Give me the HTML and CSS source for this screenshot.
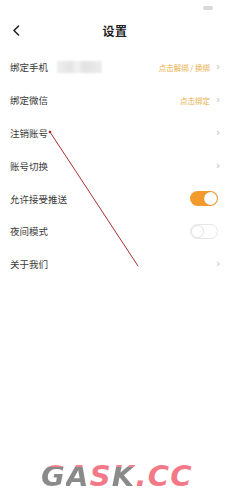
FILE: index.html
```html
<!DOCTYPE html>
<html lang="zh">
<head>
<meta charset="utf-8">
<link rel="stylesheet" href="styles.css">
</head>
<body>
<div class="screen">
  <div class="status"><span class="status-dot"></span></div>
  <div class="header">
    <svg class="back" width="8" height="11" viewBox="0 0 8 11"><path d="M6.5 1 L2 5.5 L6.5 10" fill="none" stroke="#222" stroke-width="1.6" stroke-linecap="round" stroke-linejoin="round"/></svg>
    <div class="title">设置</div>
  </div>
  <div class="list">
    <div class="row">
      <span class="label">绑定手机</span>
      <span class="phone"></span>
      <span class="spacer"></span>
      <span class="action">点击解绑 / 换绑</span>
      <span class="chev">›</span>
    </div>
    <div class="row">
      <span class="label">绑定微信</span>
      <span class="spacer"></span>
      <span class="action">点击绑定</span>
      <span class="chev">›</span>
    </div>
    <div class="row">
      <span class="label">注销账号</span>
      <span class="spacer"></span>
      <span class="chev">›</span>
    </div>
    <div class="row">
      <span class="label">账号切换</span>
      <span class="spacer"></span>
      <span class="chev">›</span>
    </div>
    <div class="row">
      <span class="label">允许接受推送</span>
      <span class="spacer"></span>
      <span class="toggle on"><span class="knob"></span></span>
    </div>
    <div class="row">
      <span class="label">夜间模式</span>
      <span class="spacer"></span>
      <span class="toggle off"><span class="knob"></span></span>
    </div>
    <div class="row">
      <span class="label">关于我们</span>
      <span class="spacer"></span>
      <span class="chev">›</span>
    </div>
  </div>
  <svg class="annot" width="230" height="498" viewBox="0 0 230 498"><circle cx="50" cy="132" r="1.3" fill="#a82020"/><path d="M50 132 L138 266" stroke="#a83030" stroke-width="1" fill="none" stroke-linecap="round"/></svg>
  <div class="watermark"><span class="wm-g">G</span><span class="wm-g">A</span><span class="wm-p">S</span><span class="wm-g">K</span><span class="wm-p">.CC</span></div>
</div>
</body>
</html>
```
FILE: styles.css
```css
html, body {
  margin: 0;
  padding: 0;
  background: #fff;
}
.screen {
  position: relative;
  width: 230px;
  height: 498px;
  overflow: hidden;
  font-family: "Noto Sans CJK SC", "Noto Sans", sans-serif;
  color: #333;
}
.status {
  height: 16px;
  display: flex;
  justify-content: flex-end;
  align-items: center;
  padding-right: 17px;
}
.status-dot {
  width: 10px;
  height: 4px;
  border-radius: 2px;
  background: #d8d8d8;
}
.header {
  position: relative;
  height: 29px;
  display: flex;
  align-items: center;
  justify-content: center;
}
.back {
  position: absolute;
  left: 12px;
  top: 9px;
}
.title {
  font-size: 12px;
  font-weight: 700;
  color: #222;
  letter-spacing: 0.5px;
}
.list {
  padding-top: 6px;
}
.row {
  height: 32.8px;
  display: flex;
  align-items: center;
  padding: 0 10px 0 10px;
}
.label {
  font-size: 9.5px;
  color: #3a3a3a;
}
.phone {
  width: 45px;
  height: 12px;
  margin-left: 9px;
  background: linear-gradient(90deg, #eeeeee 0%, #e4e4e4 30%, #f2f2f2 45%, #e2e2e2 60%, #ececec 100%);
  filter: blur(1px);
}
.spacer {
  flex: 1;
}
.action {
  font-size: 7.5px;
  color: #e9b04c;
  margin-right: 6px;
}
.chev {
  font-size: 11px;
  line-height: 10px;
  color: #bdbdbd;
  width: 4px;
  font-family: "DejaVu Sans", sans-serif;
}
.toggle {
  position: relative;
  width: 28px;
  height: 15px;
  border-radius: 8px;
  box-sizing: border-box;
  margin-right: 2px;
}
.toggle.on {
  background: #f39a2c;
}
.toggle.off {
  background: #fff;
  border: 1px solid #e6e6e6;
}
.knob {
  position: absolute;
  top: 1px;
  width: 13px;
  height: 13px;
  border-radius: 50%;
  background: #fff;
  box-sizing: border-box;
}
.toggle.on .knob {
  right: 1px;
  box-shadow: 0 0 1px rgba(0,0,0,0.2);
}
.toggle.off .knob {
  top: 0;
  left: 0;
  border: 1px solid #e2e2e2;
}
.annot {
  position: absolute;
  left: 0;
  top: 0;
}
.watermark {
  position: absolute;
  left: 41px;
  top: 459px;
  width: 160px;
  font-family: "DejaVu Sans", sans-serif;
  font-weight: 900;
  font-style: italic;
  font-size: 29px;
  line-height: 35px;
  letter-spacing: 1.2px;
  white-space: nowrap;
}
.wm-g {
  background: linear-gradient(180deg, #f0828f 0%, #f0828f 25%, #8a8a8a 25%, #8a8a8a 100%);
  -webkit-background-clip: text;
  background-clip: text;
  color: transparent;
}
.wm-p {
  color: #f27a88;
}
```
